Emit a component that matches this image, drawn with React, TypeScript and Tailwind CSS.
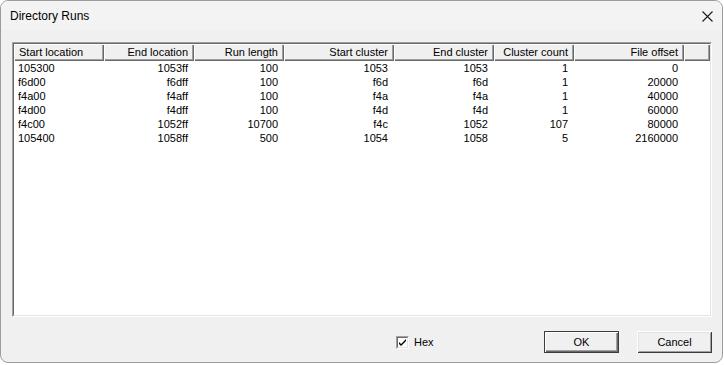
const columns = [
  { title: "Start location", width: "w-[90px]", left: true },
  { title: "End location", width: "w-[90px]" },
  { title: "Run length", width: "w-[90px]" },
  { title: "Start cluster", width: "w-[110px]" },
  { title: "End cluster", width: "w-[100px]" },
  { title: "Cluster count", width: "w-[80px]" },
  { title: "File offset", width: "w-[110px]" },
];

const runs = [
  ["105300", "1053ff", "100", "1053", "1053", "1", "0"],
  ["f6d00", "f6dff", "100", "f6d", "f6d", "1", "20000"],
  ["f4a00", "f4aff", "100", "f4a", "f4a", "1", "40000"],
  ["f4d00", "f4dff", "100", "f4d", "f4d", "1", "60000"],
  ["f4c00", "1052ff", "10700", "f4c", "1052", "107", "80000"],
  ["105400", "1058ff", "500", "1054", "1058", "5", "2160000"],
];

const headerBevel =
  "shadow-[inset_1px_1px_#ffffff,inset_-1px_-1px_#696969,inset_-2px_-2px_#a0a0a0]";

function Button({ label, isDefault }: { label: string; isDefault?: boolean }) {
  return (
    <button
      className={
        "w-[75px] h-[22px] bg-[#f0f0f0] text-[11px] text-black " +
        (isDefault
          ? "border border-[#3c3c3c] shadow-[inset_1px_1px_#ffffff,inset_-1px_-1px_#696969,inset_-2px_-2px_#a0a0a0]"
          : "shadow-[inset_1px_1px_#ffffff,inset_-1px_-1px_#3c3c3c,inset_2px_2px_#e3e3e3,inset_-2px_-2px_#a0a0a0]")
      }
    >
      {label}
    </button>
  );
}

export default function App() {
  return (
    <div className="w-[724px] h-[365px] bg-white font-['Liberation_Sans',Arial,sans-serif]">
      <div className="w-[723px] h-[363px] flex flex-col bg-[#f0f0f0] border border-[#9c9c9c] rounded-[8px] overflow-hidden">
        {/* title bar */}
        <div className="h-[29px] flex items-center justify-between pl-[9px] pr-[9px] bg-[#f3f3f3]">
          <span className="text-[12px] text-black">Directory Runs</span>
          <svg width="11" height="11" viewBox="0 0 11 11" className="mt-[1px]">
            <path d="M0.5 0.5 L10.5 10.5 M10.5 0.5 L0.5 10.5" stroke="#1a1a1a" strokeWidth="1.1" />
          </svg>
        </div>

        <div className="pt-[12px] pl-[11px]">
          {/* list view */}
          <div className="w-[700px] h-[275px] bg-white border-t border-l border-[#a0a0a0] border-r border-b border-r-white border-b-white">
            <div className="h-full border-t border-l border-[#696969] border-r border-b border-r-[#e3e3e3] border-b-[#e3e3e3] text-[11px] text-black">
              <div className="flex h-[17px]">
                {columns.map((c) => (
                  <div
                    key={c.title}
                    className={`${c.width} h-full flex items-center bg-[#f0f0f0] ${headerBevel} ${
                      c.left ? "pl-[5px]" : "justify-end pr-[6px]"
                    }`}
                  >
                    {c.title}
                  </div>
                ))}
                <div className={`flex-1 h-full bg-[#f0f0f0] ${headerBevel}`} />
              </div>
              {runs.map((row, i) => (
                <div key={i} className="flex h-[14px] items-center">
                  {row.map((v, j) => (
                    <div
                      key={j}
                      className={`${columns[j].width} leading-[14px] ${
                        columns[j].left ? "pl-[4px]" : "text-right pr-[6px]"
                      }`}
                    >
                      {v}
                    </div>
                  ))}
                </div>
              ))}
            </div>
          </div>

          {/* footer */}
          <div className="flex items-center w-[700px] mt-[14px]">
            <label className="flex items-center ml-[384px] text-[11px] text-black">
              <span className="w-[13px] h-[13px] bg-white border-t border-l border-[#a0a0a0] border-r border-b border-r-white border-b-white flex">
                <span className="flex-1 border-t border-l border-[#696969] border-r border-b border-r-[#e3e3e3] border-b-[#e3e3e3] flex items-center justify-center">
                  <svg width="7" height="7" viewBox="0 0 7 7">
                    <path d="M0 3 L0 5 L2 7 L7 2 L7 0 L2 5 Z" fill="#000" />
                  </svg>
                </span>
              </span>
              <span className="ml-[5px]">Hex</span>
            </label>
            <div className="ml-auto flex gap-[18px]">
              <Button label="OK" isDefault />
              <Button label="Cancel" />
            </div>
          </div>
        </div>
      </div>
    </div>
  );
}
